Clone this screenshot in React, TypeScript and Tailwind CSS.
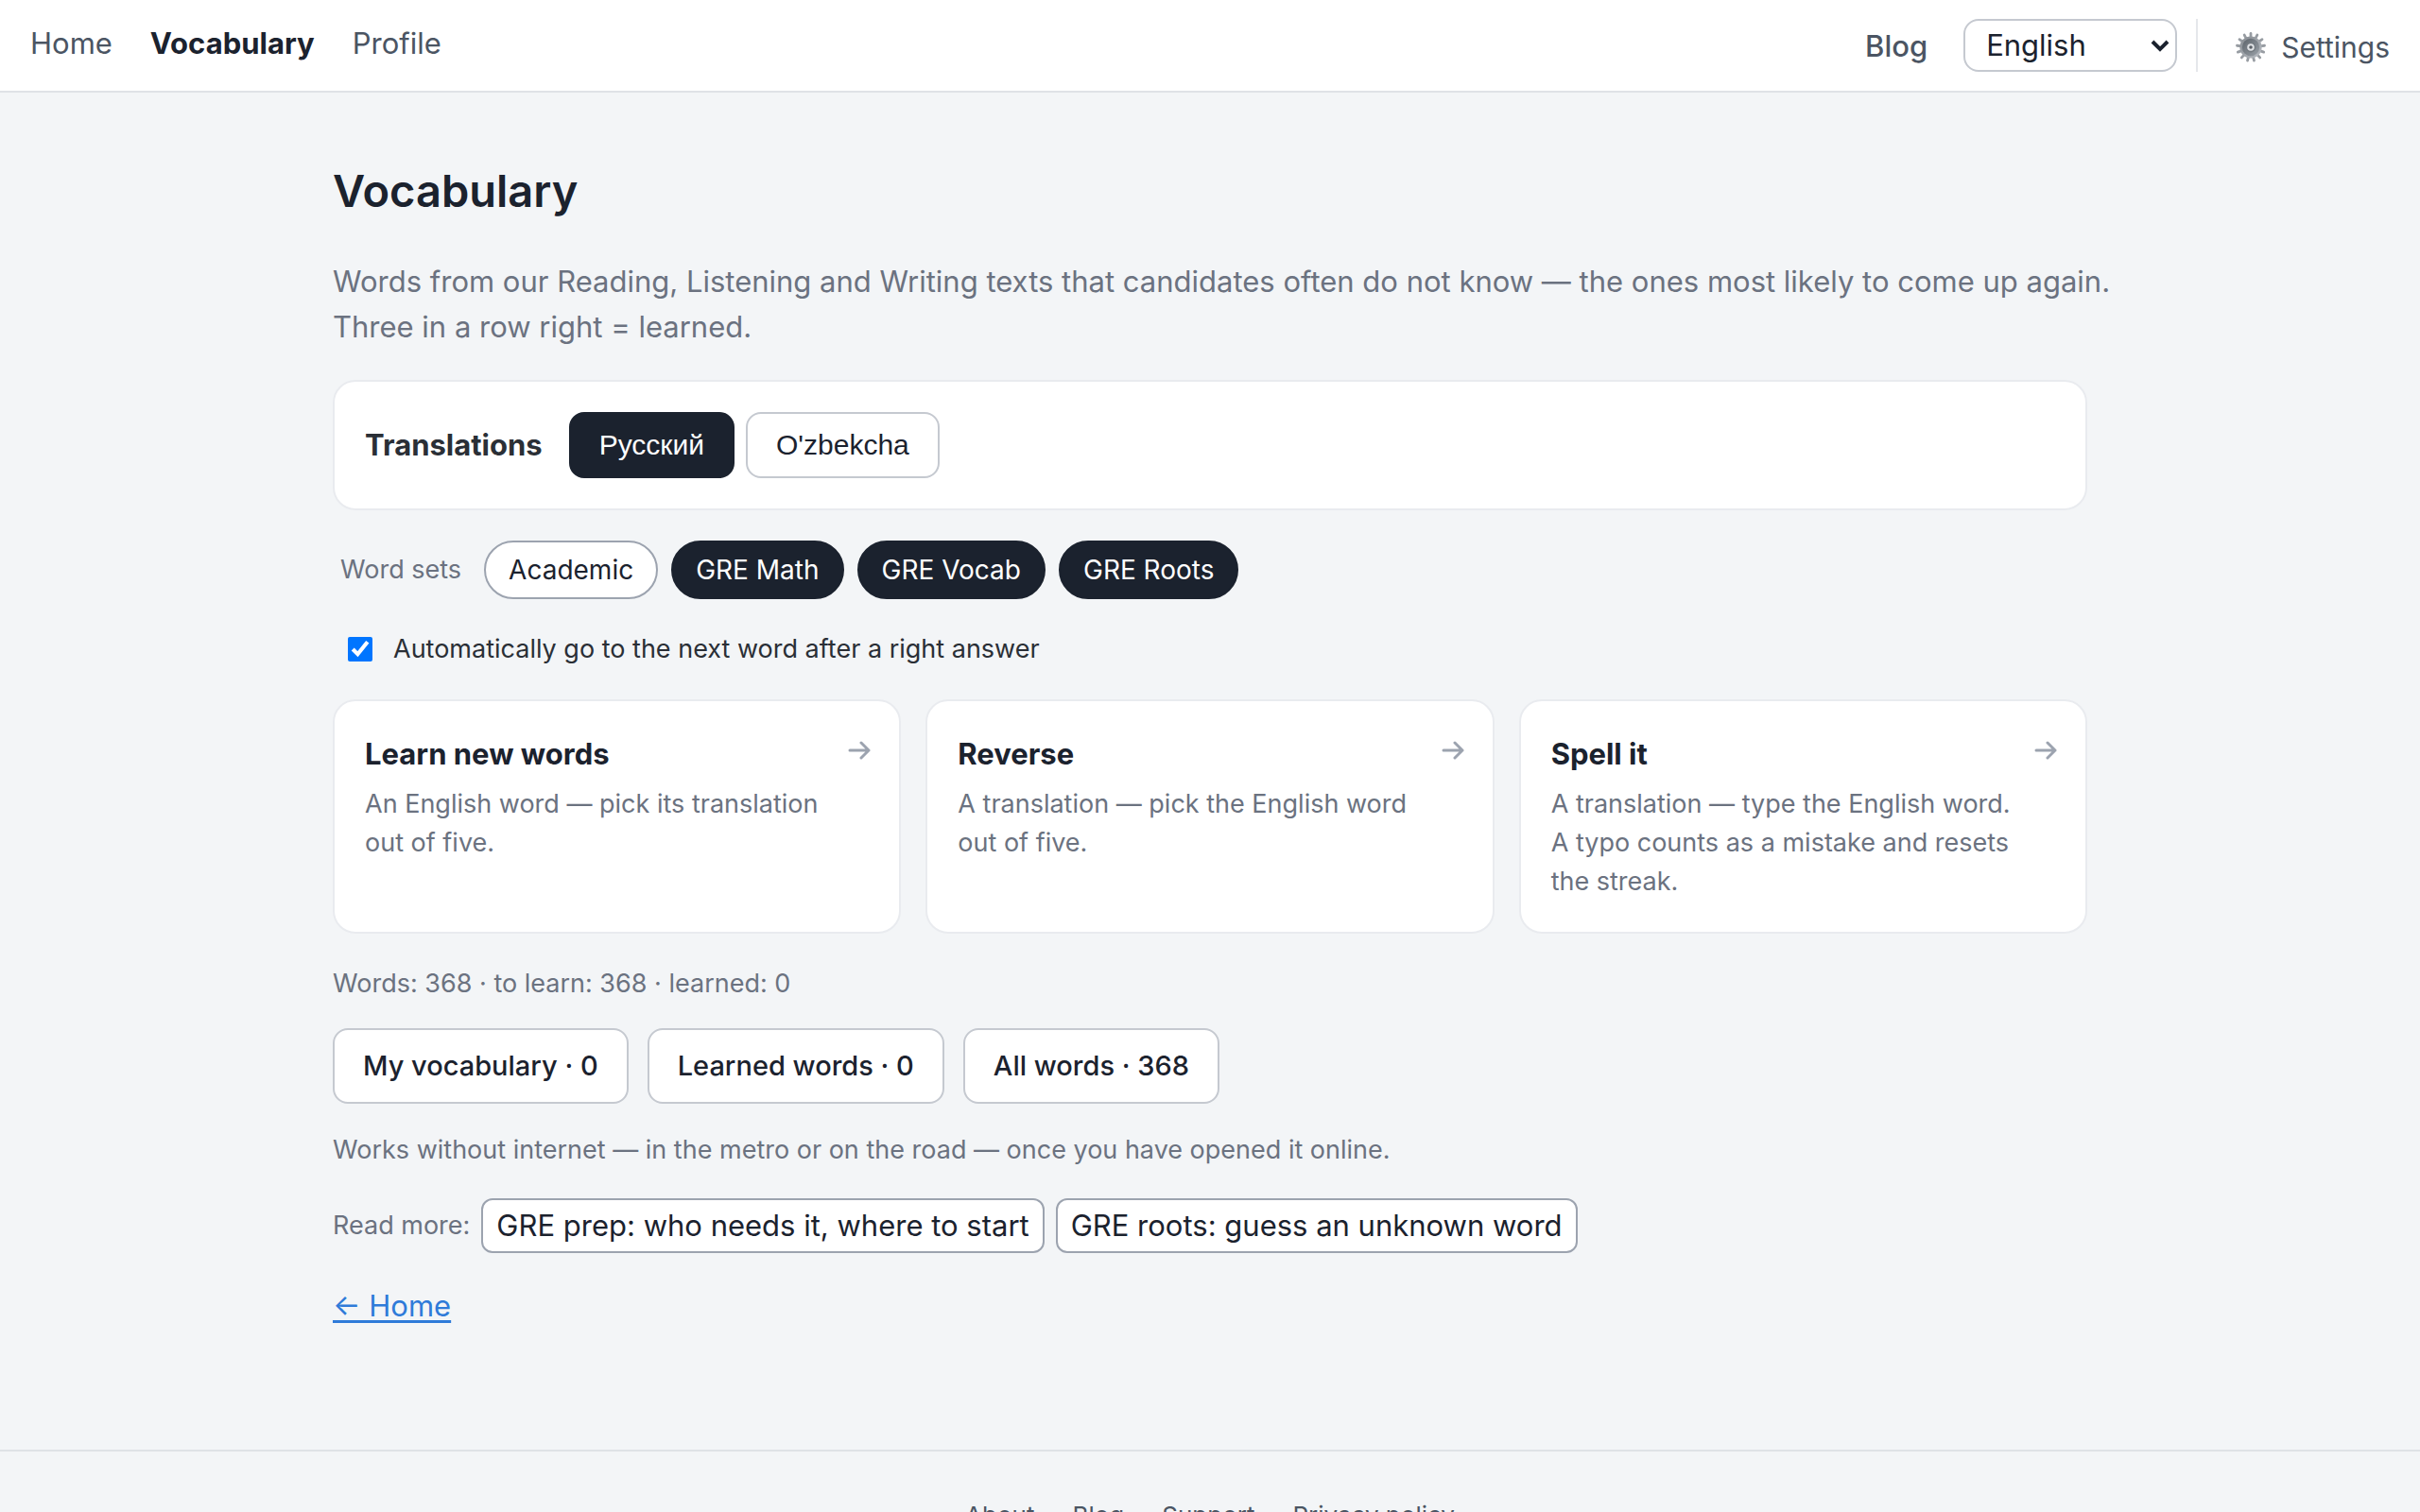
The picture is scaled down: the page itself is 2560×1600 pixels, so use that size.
import { useState } from "react";

/* ================= DATA ================= */

const TRANSLATIONS = [
  { id: "ru", label: "Русский" },
  { id: "uz", label: "O'zbekcha" },
];

const WORD_SETS = ["Academic", "GRE Math", "GRE Vocab", "GRE Roots"];

const MODES = [
  {
    title: "Learn new words",
    text: "An English word — pick its translation out of five.",
  },
  {
    title: "Reverse",
    text: "A translation — pick the English word out of five.",
  },
  {
    title: "Spell it",
    text: "A translation — type the English word. A typo counts as a mistake and resets the streak.",
  },
];

const LISTS = ["My vocabulary · 0", "Learned words · 0", "All words · 368"];

const ARTICLES = [
  "GRE prep: who needs it, where to start",
  "GRE roots: guess an unknown word",
];

const FOOTER_LINKS = ["About", "Blog", "Support", "Privacy policy"];

/* ================= MAIN COMPONENT ================= */

export default function App() {
  const [lang, setLang] = useState("ru");
  const [sets, setSets] = useState(["GRE Math", "GRE Vocab", "GRE Roots"]);
  const [autoNext, setAutoNext] = useState(true);

  const toggleSet = (name: string) => {
    setSets((prev) =>
      prev.includes(name) ? prev.filter((s) => s !== name) : [...prev, name],
    );
  };

  return (
    <div className="min-h-screen bg-[#f3f5f7] font-['Inter','Liberation_Sans',sans-serif] text-[31px] leading-[48px] text-[#2a2f36]">
      <Header />

      <main className="mx-auto max-w-[1920px] px-8 pt-18 pb-32">
        <h1 className="text-[47px] leading-[64px] font-semibold text-[#1b222e]">
          Vocabulary
        </h1>

        <p className="mt-10 -mr-8 text-[#6b7280]">
          Words from our Reading, Listening and Writing texts that candidates
          often do not know — the ones most likely to come up again. Three in a
          row right = learned.
        </p>

        {/* TRANSLATIONS */}
        <section className="mt-8 flex items-center gap-7 rounded-3xl border-2 border-[#e9ebef] bg-white p-8">
          <h2 className="font-bold">Translations</h2>
          <div className="flex gap-3">
            {TRANSLATIONS.map((t) => (
              <button
                key={t.id}
                type="button"
                onClick={() => setLang(t.id)}
                className={`h-[70px] rounded-2xl border-2 px-[30px] font-['Liberation_Sans',sans-serif] text-[30px] ${
                  lang === t.id
                    ? "border-[#1b222e] bg-[#1b222e] text-white"
                    : "border-[#c5c9d0] bg-white text-[#1b222e]"
                }`}
              >
                {t.label}
              </button>
            ))}
          </div>
        </section>

        {/* WORD SETS */}
        <div className="mt-8 flex items-center px-2 text-[27px]">
          <span className="mr-6 text-[#6b7280]">Word sets</span>
          <div className="flex gap-3.5">
            {WORD_SETS.map((name) => (
              <button
                key={name}
                type="button"
                onClick={() => toggleSet(name)}
                className={`h-[62px] rounded-full border-2 px-6 text-[28px] ${
                  sets.includes(name)
                    ? "border-[#1b222e] bg-[#1b222e] text-white"
                    : "border-[#9ca3af] bg-white text-[#1b222e]"
                }`}
              >
                {name}
              </button>
            ))}
          </div>
        </div>

        <label className="mt-8 flex items-center gap-[22px] px-4 text-[27px] leading-[42px]">
          <input
            type="checkbox"
            checked={autoNext}
            onChange={(e) => setAutoNext(e.target.checked)}
            className="size-[26px] accent-[#0075ff]"
          />
          Automatically go to the next word after a right answer
        </label>

        {/* MODES */}
        <div className="mt-8 grid grid-cols-3 gap-[26px]">
          {MODES.map((mode) => (
            <a
              key={mode.title}
              href="#"
              className="flex min-h-[248px] items-start justify-between rounded-3xl border-2 border-[#e9ebef] bg-white py-8 pr-[30px] pl-8"
            >
              <div className="max-w-[504px]">
                <h3 className="font-bold text-[#1b222e]">{mode.title}</h3>
                <p className="mt-2 text-[27px] leading-[41px] text-[#6b7280]">
                  {mode.text}
                </p>
              </div>
              <Arrow />
            </a>
          ))}
        </div>

        <p className="mt-8 text-[27px] leading-[42px] text-[#6b7280]">
          Words: 368 · to learn: 368 · learned: 0
        </p>

        <div className="mt-[26px] flex gap-5">
          {LISTS.map((label) => (
            <button
              key={label}
              type="button"
              className="h-20 rounded-2xl border-2 border-[#c5c9d0] bg-white px-[30px] text-[29px] font-medium text-[#1b222e]"
            >
              {label}
            </button>
          ))}
        </div>

        <p className="mt-7 text-[27px] leading-[42px] text-[#6b7280]">
          Works without internet — in the metro or on the road — once you have
          opened it online.
        </p>

        {/* ARTICLES */}
        <div className="mt-[30px] flex items-center gap-3">
          <span className="text-[27px] text-[#6b7280]">Read more:</span>
          {ARTICLES.map((title) => (
            <a
              key={title}
              href="#"
              className="rounded-xl border-2 border-[#9ca3af] bg-white px-3.5 py-[3px] text-[#1b222e]"
            >
              {title}
            </a>
          ))}
        </div>

        <a
          href="#"
          className="mt-8 inline-block text-[#2f7bd9] underline underline-offset-4"
        >
          ← Home
        </a>
      </main>

      {/* FOOTER */}
      <footer className="flex h-[160px] justify-center gap-10 border-t-2 border-[#dfe2e6] pt-12 text-[26px] leading-[40px] text-[#4b5563]">
        {FOOTER_LINKS.map((label) => (
          <a key={label} href="#">
            {label}
          </a>
        ))}
      </footer>
    </div>
  );
}

/* ================= HEADER ================= */

function Header() {
  const [locale, setLocale] = useState("en");

  return (
    <header className="flex items-start justify-between border-b-2 border-[#dfe2e6] bg-white px-8 py-5 text-[#4b5563]">
      <nav className="flex gap-10 pt-0.5">
        <a href="#">Home</a>
        <a href="#" className="font-bold text-[#1b222e]">
          Vocabulary
        </a>
        <a href="#">Profile</a>
      </nav>

      <div className="flex items-center">
        <a href="#" className="pt-0.5 font-medium">
          Blog
        </a>
        <div className="relative ml-[38px]">
          <select
            aria-label="Language"
            value={locale}
            onChange={(e) => setLocale(e.target.value)}
            className="block h-14 w-[226px] appearance-none rounded-2xl border-2 border-[#c5c9d0] bg-white px-[22px] text-[#1b222e]"
          >
            <option value="en">English</option>
            <option value="ru">Русский</option>
            <option value="uz">O'zbekcha</option>
          </select>
          <svg
            viewBox="0 0 20 14"
            className="pointer-events-none absolute top-[22px] right-2 h-3.5 w-5 text-[#1b222e]"
            fill="none"
            stroke="currentColor"
            strokeWidth="4"
            aria-hidden="true"
          >
            <path d="M2 2l8 8 8-8" />
          </svg>
        </div>
        <a
          href="#"
          className="ml-5 flex h-14 items-center gap-4 border-l-2 border-[#e5e7eb] pt-1 pl-10 text-[30px]"
        >
          <GearIcon />
          Settings
        </a>
      </div>
    </header>
  );
}

/* ================= ICONS ================= */

function Arrow() {
  return (
    <svg
      viewBox="0 0 24 20"
      className="mt-2.5 h-5 w-6 shrink-0 text-[#9ca3af]"
      fill="none"
      stroke="currentColor"
      strokeWidth="3"
      strokeLinecap="round"
      strokeLinejoin="round"
      aria-hidden="true"
    >
      <path d="M2 10h20M14 2l8 8-8 8" />
    </svg>
  );
}

function GearIcon() {
  const teeth = Array.from({ length: 13 }, (_, i) => (i * 360) / 13);
  return (
    <svg viewBox="0 0 32 32" className="size-8" aria-hidden="true">
      <defs>
        <linearGradient id="gear-rim" x1="0" y1="0" x2="1" y2="1">
          <stop offset="0" stopColor="#84898f" />
          <stop offset="1" stopColor="#b9bec4" />
        </linearGradient>
        <linearGradient id="gear-face" x1="0" y1="0" x2="1" y2="1">
          <stop offset="0" stopColor="#5d646b" />
          <stop offset="1" stopColor="#9aa1a8" />
        </linearGradient>
      </defs>
      {teeth.map((deg) => (
        <path
          key={deg}
          d="M16 1.4v4.5"
          stroke="#979ca2"
          strokeWidth="2.8"
          strokeLinecap="round"
          transform={`rotate(${deg} 16 16)`}
        />
      ))}
      <circle cx="16" cy="16" r="11.6" fill="url(#gear-rim)" />
      <circle cx="16" cy="16" r="9.2" fill="url(#gear-face)" />
      <circle cx="16" cy="16" r="5.4" fill="#747b82" />
      <circle cx="16" cy="16" r="3.8" fill="#dfe2e5" />
      <circle cx="16" cy="16" r="1.8" fill="#5a6067" />
    </svg>
  );
}
